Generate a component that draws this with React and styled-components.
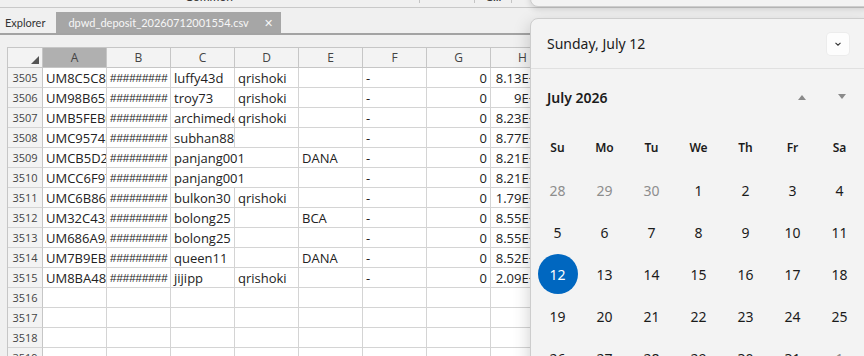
import React from "react"
import styled, { createGlobalStyle } from "styled-components"

const GlobalStyle = createGlobalStyle`
  html, body {
    margin: 0;
    padding: 0;
  }
  body {
    background: #f0f0f0;
    font-family: "Noto Sans", "Open Sans", sans-serif;
  }
`

const Page = styled.div`
  position: relative;
  width: 864px;
  height: 356px;
  overflow: hidden;
  background: #f0f0f0;
`

const Ribbon = styled.div`
  height: 7px;
  border-bottom: 1px solid #c9c9c9;
  overflow: hidden;
  display: flex;
  align-items: flex-start;
  font-family: Lato, sans-serif;
  font-size: 12px;
  line-height: 14px;
  color: #333;
`
const RibbonLabel = styled.span`
  margin-top: -10px;
  margin-left: ${p => p.$left}px;
`
const RibbonTick = styled.span`
  width: 1px;
  height: 3px;
  background: #c4c4c4;
  margin-left: ${p => p.$left}px;
`

const TabBar = styled.div`
  display: flex;
  height: 21px;
  margin-top: 4px;
  border-bottom: 2px solid #a3a3a3;
  font-family: Lato, sans-serif;
  font-size: 11px;
`
const Tab = styled.div`
  display: flex;
  align-items: center;
  gap: 15px;
  padding: ${p => (p.$active ? "0 8px 0 12px" : "0 11px 0 5px")};
  background: ${p => (p.$active ? "#a6a6a6" : "transparent")};
  color: ${p => (p.$active ? "#f6f6f6" : "#333")};
`
const Close = styled.span`
  font-size: 11px;
  color: #f6f6f6;
`

const SheetArea = styled.div`
  padding: 12px 0 0 7px;
`
const Sheet = styled.div`
  display: grid;
  grid-template-columns: 35px repeat(8, 64px);
  grid-auto-rows: 20px;
  border-left: 1px solid #c6c6c6;
  border-top: 1px solid #c6c6c6;
  width: max-content;
  font-family: "Open Sans", "Noto Sans", sans-serif;
`
const Corner = styled.div`
  position: relative;
  background: #f3f3f3;
  border-right: 1px solid #c6c6c6;
  border-bottom: 1px solid #c6c6c6;
  &::after {
    content: "";
    position: absolute;
    right: 3px;
    bottom: 3px;
    border-left: 8px solid transparent;
    border-bottom: 8px solid #555;
  }
`
const ColHead = styled.div`
  display: flex;
  align-items: center;
  justify-content: center;
  background: ${p => (p.$selected ? "#b0b0b0" : "#f3f3f3")};
  border-right: 1px solid #c6c6c6;
  border-bottom: 1px solid #c6c6c6;
  font-size: 12px;
  color: #444;
`
const RowHead = styled.div`
  display: flex;
  align-items: center;
  justify-content: center;
  background: #f3f3f3;
  border-right: 1px solid #c6c6c6;
  border-bottom: 1px solid #d4d4d4;
  font-size: 11px;
  color: #444;
`
const Cell = styled.div`
  grid-column: span ${p => p.$span};
  display: flex;
  align-items: center;
  justify-content: ${p => (p.$right ? "flex-end" : "flex-start")};
  padding: 0 3px;
  background: #fff;
  border-right: 1px solid #d4d4d4;
  border-bottom: 1px solid #d4d4d4;
  overflow: hidden;
  white-space: nowrap;
  font-size: 13px;
  color: #222;
`
const Hashes = styled.span`
  font-family: "Liberation Sans", Arial, sans-serif;
  font-size: 11.5px;
`

const Flyout = styled.div`
  position: absolute;
  left: 530px;
  top: 18px;
  width: 340px;
  height: 380px;
  background: #f3f3f3;
  border: 1px solid #cdcdcd;
  border-radius: 8px;
  box-shadow: 0 6px 18px rgba(0, 0, 0, 0.2);
  font-family: "Noto Sans", sans-serif;
  color: #1b1b1b;
`
const TopFlyout = styled.div`
  position: absolute;
  left: 530px;
  top: -20px;
  width: 340px;
  height: 25px;
  background: #f3f3f3;
  border: 1px solid #cdcdcd;
  border-radius: 8px;
  box-shadow: 0 2px 6px rgba(0, 0, 0, 0.15);
`
const DateHeader = styled.div`
  display: flex;
  align-items: center;
  justify-content: space-between;
  height: 49px;
  padding: 0 22px 0 16px;
  border-bottom: 1px solid #e0e0e0;
  font-size: 14px;
`
const ChevronButton = styled.div`
  width: 22px;
  height: 22px;
  display: flex;
  align-items: center;
  justify-content: center;
  background: #fdfdfd;
  border-radius: 4px;
  box-shadow: 0 0 0 1px #ececec;
`
const MonthRow = styled.div`
  display: flex;
  align-items: center;
  height: 56px;
  padding: 0 9px 0 16px;
  font-size: 14px;
  font-weight: 600;
`
const MonthTitle = styled.div`
  flex: 1;
`
const NavButton = styled.div`
  width: 40px;
  height: 32px;
  display: flex;
  align-items: center;
  justify-content: center;
`
const Days = styled.div`
  display: grid;
  grid-template-columns: repeat(7, 47px);
  grid-template-rows: 44px;
  grid-auto-rows: 42px;
  padding-left: 3px;
`
const WeekDay = styled.div`
  display: flex;
  align-items: center;
  justify-content: center;
  font-size: 12px;
  font-weight: 600;
`
const Day = styled.div`
  display: flex;
  align-items: center;
  justify-content: center;
  font-size: 14px;
  color: ${p => (p.$muted ? "#8d8d8d" : "#1b1b1b")};
`
const Selected = styled.span`
  width: 40px;
  height: 40px;
  border-radius: 50%;
  background: #0067c0;
  color: #fff;
  display: flex;
  align-items: center;
  justify-content: center;
`

const cols = ["A", "B", "C", "D", "E", "F", "G", "H"]
const H = "#########"
const rows = [
  [3505, "UM8C5C87E1A4", H, "luffy43d", "qrishoki", "", "-", "0", "8.13E+15"],
  [3506, "UM98B6531C2F", H, "troy73", "qrishoki", "", "-", "0", "9E+15"],
  [3507, "UMB5FEB0C9D1", H, "archimedes77", "qrishoki", "", "-", "0", "8.23E+15"],
  [3508, "UMC9574D2E8B", H, "subhan88", "", "", "-", "0", "8.77E+15"],
  [3509, "UMCB5D2A7F30", H, "panjang001", "", "DANA", "-", "0", "8.21E+15"],
  [3510, "UMCC6F97B4E2", H, "panjang001", "", "", "-", "0", "8.21E+15"],
  [3511, "UMC6B86604AD", H, "bulkon30", "qrishoki", "", "-", "0", "1.79E+15"],
  [3512, "UM32C4328E1B", H, "bolong25", "", "BCA", "-", "0", "8.55E+15"],
  [3513, "UM686A9A5C07", H, "bolong25", "", "", "-", "0", "8.55E+15"],
  [3514, "UM7B9EBA1D66", H, "queen11", "", "DANA", "-", "0", "8.52E+15"],
  [3515, "UM8BA48E90F3", H, "jijipp", "qrishoki", "", "-", "0", "2.09E+15"],
  [3516, "", "", "", "", "", "", "", ""],
  [3517, "", "", "", "", "", "", "", ""],
  [3518, "", "", "", "", "", "", "", ""],
  [3519, "", "", "", "", "", "", "", ""],
]

const weekDays = ["Su", "Mo", "Tu", "We", "Th", "Fr", "Sa"]
const calendar = [
  [28, 29, 30, 1, 2, 3, 4],
  [5, 6, 7, 8, 9, 10, 11],
  [12, 13, 14, 15, 16, 17, 18],
  [19, 20, 21, 22, 23, 24, 25],
  [26, 27, 28, 29, 30, 31, 1],
]

const renderCells = values => {
  const out = []
  for (let i = 0; i < values.length; i++) {
    const v = values[i]
    const next = values[i + 1]
    const span = v.length >= 10 && next === "" && i > 0 ? 2 : 1
    out.push(
      <Cell key={i} $span={span} $right={i >= 6}>
        {v === H ? <Hashes>{v}</Hashes> : v}
      </Cell>
    )
    i += span - 1
  }
  return out
}

const App = () => {
  return (
    <Page>
      <GlobalStyle />
      <Ribbon>
        <RibbonLabel $left={185}>Common</RibbonLabel>
        <RibbonTick $left={186} />
        <RibbonTick $left={54} />
        <RibbonLabel $left={11}>1...</RibbonLabel>
        <RibbonTick $left={10} />
      </Ribbon>
      <TabBar>
        <Tab>Explorer</Tab>
        <Tab $active>
          dpwd_deposit_20260712001554.csv
          <Close>✕</Close>
        </Tab>
      </TabBar>
      <SheetArea>
        <Sheet>
          <Corner />
          {cols.map(c => (
            <ColHead key={c} $selected={c === "A"}>
              {c}
            </ColHead>
          ))}
          {rows.map(r => (
            <React.Fragment key={r[0]}>
              <RowHead>{r[0]}</RowHead>
              {renderCells(r.slice(1))}
            </React.Fragment>
          ))}
        </Sheet>
      </SheetArea>

      <TopFlyout />
      <Flyout>
        <DateHeader>
          <span>Sunday, July 12</span>
          <ChevronButton>
            <svg width="10" height="10" viewBox="0 0 10 10">
              <path d="M2.5 3.8 L5 6.2 L7.5 3.8" fill="none" stroke="#333" strokeWidth="1.1" />
            </svg>
          </ChevronButton>
        </DateHeader>
        <MonthRow>
          <MonthTitle>July 2026</MonthTitle>
          <NavButton>
            <svg width="10" height="8" viewBox="0 0 10 8">
              <path d="M1 7 L5 2 L9 7 Z" fill="#8a8a8a" />
            </svg>
          </NavButton>
          <NavButton>
            <svg width="10" height="8" viewBox="0 0 10 8">
              <path d="M1 1 L5 6 L9 1 Z" fill="#8a8a8a" />
            </svg>
          </NavButton>
        </MonthRow>
        <Days>
          {weekDays.map(d => (
            <WeekDay key={d}>{d}</WeekDay>
          ))}
          {calendar.map((week, wi) =>
            week.map((d, di) => {
              const muted = (wi === 0 && d > 20) || (wi === 4 && d < 10)
              return (
                <Day key={`${wi}-${di}`} $muted={muted}>
                  {wi === 2 && d === 12 ? <Selected>{d}</Selected> : d}
                </Day>
              )
            })
          )}
        </Days>
      </Flyout>
    </Page>
  )
}

export default App
